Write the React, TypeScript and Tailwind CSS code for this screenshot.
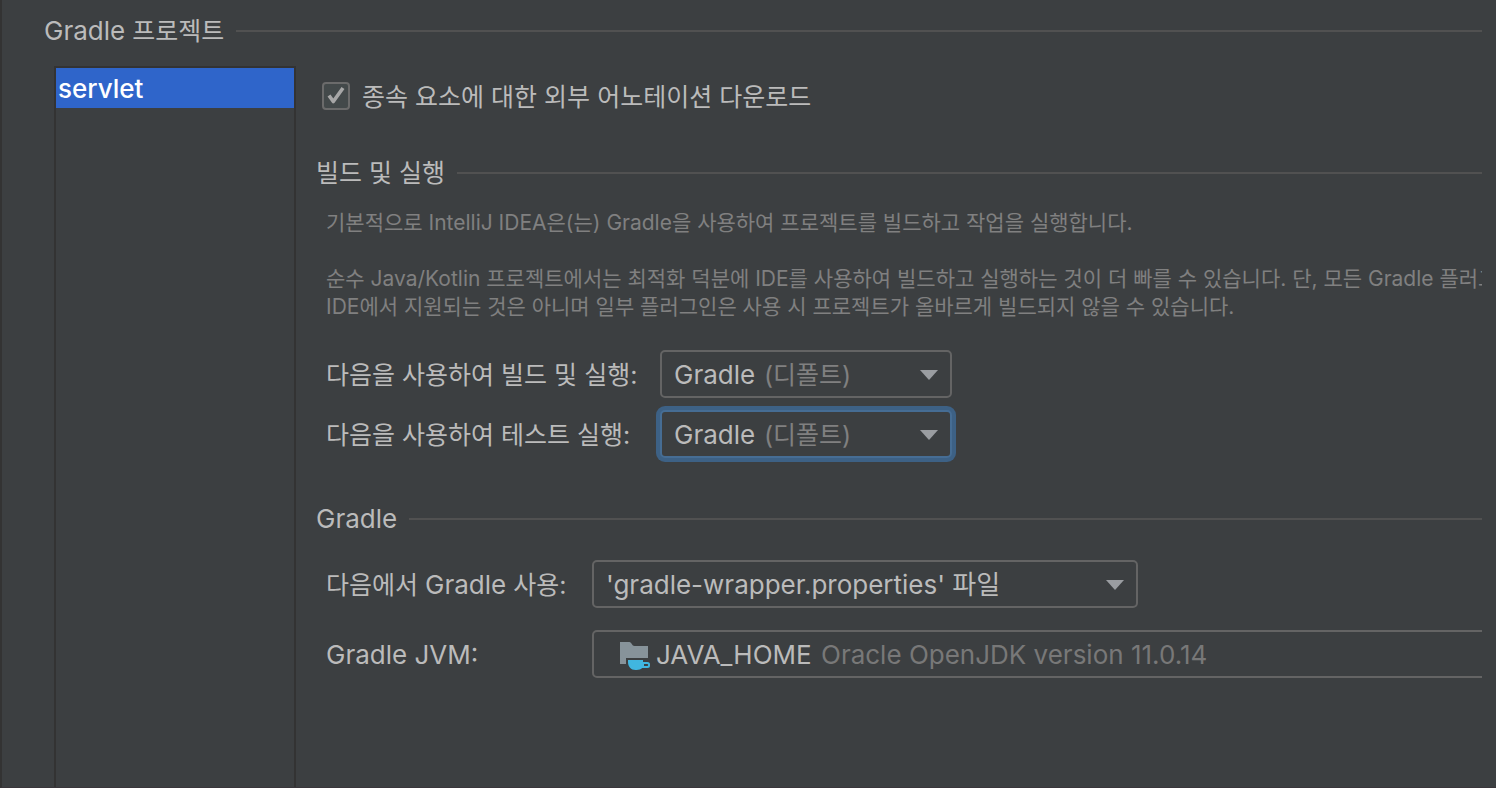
import { useId, useState } from 'react';
import type { ReactNode } from 'react';
import { clsx } from 'clsx';

function SectionTitle({ children }: { children: ReactNode }) {
  return (
    <div className="flex h-10 items-center gap-3">
      <h2 className="shrink-0 text-[25px] leading-10 font-normal">{children}</h2>
      <div className="h-[2px] flex-1 bg-[#515151]" />
    </div>
  );
}

function FieldLabel({ htmlFor, children }: { htmlFor: string; children: ReactNode }) {
  return (
    <label htmlFor={htmlFor} className="pt-px leading-8 whitespace-nowrap">
      {children}
    </label>
  );
}

function DownArrow() {
  return (
    <svg
      viewBox="0 0 18 10"
      className="pointer-events-none col-start-1 row-start-1 mt-[2px] mr-[14px] h-[10px] w-[18px] justify-self-end fill-[#9a9da1]"
      aria-hidden="true"
    >
      <path d="M0 0h18L9 10z" />
    </svg>
  );
}

function JdkFolderIcon() {
  return (
    <svg
      viewBox="0 0 30 28"
      className="pointer-events-none col-start-1 row-start-1 mt-1 ml-[28px] h-7 w-[30px]"
      aria-hidden="true"
    >
      <path fill="#87939a" d="M0 0h9.500c2 0 2.500 4 5 4H28v12H6v6H0z" />
      <path
        fill="#40b6e0"
        fillRule="evenodd"
        d="M8 18h15v2h4.500a2.500 2.500 0 0 1 2.500 2.500v1a2.500 2.500 0 0 1-2.500 2.500h-5.200C21 27.200 19 28 16.500 28h-1C11 28 8 24.500 8 20zM24 22v2h3.200a1 1 0 0 0 0-2z"
      />
    </svg>
  );
}

type PickerProps = {
  id: string;
  options: string[];
  hint?: string;
  hintClass?: string;
  className?: string;
  indentClass?: string;
  focused?: boolean;
  icon?: ReactNode;
};

function Picker({ id, options, hint, hintClass, className, indentClass = 'pl-3', focused, icon }: PickerProps) {
  return (
    <div className={clsx('grid h-12 items-center', className)}>
      <select
        id={id}
        className={clsx(
          'col-start-1 row-start-1 h-12 w-full appearance-none rounded-[5px] border-2 bg-[#3c3f41] pr-10 text-[26px] text-[#bbbbbb] outline-none',
          indentClass,
          focused ? 'border-[#466d94] ring-4 ring-[#3d6185]' : 'border-[#646464]',
        )}
      >
        {options.map((option) => (
          <option key={option}>{option}</option>
        ))}
      </select>
      {icon}
      {hint && (
        <span className={clsx('pointer-events-none col-start-1 row-start-1 whitespace-nowrap', hintClass)}>{hint}</span>
      )}
      <DownArrow />
    </div>
  );
}

export default function App() {
  const id = useId();
  const [download, setDownload] = useState(true);

  return (
    <div className="flex min-h-screen flex-col overflow-hidden border-b border-l-2 border-b-[#3a363b] border-l-[#333333] bg-[#3c3f41] pt-[11px] pr-[14px] font-['Inter','Noto_Sans_CJK_KR',sans-serif] text-[25px] text-[#bbbbbb]">
      <div className="pl-[42px]">
        <SectionTitle>
          <span className="text-[26px]">Gradle</span> 프로젝트
        </SectionTitle>
      </div>

      <div className="mt-[15px] flex flex-1 pl-[52px]">
        <ul className="w-[242px] shrink-0 border-2 border-b-0 border-[#333333]">
          <li>
            <button
              type="button"
              className="flex h-10 w-full items-center bg-[#2f65ca] pt-px pl-[2px] text-left text-[26px] font-medium text-white"
            >
              servlet
            </button>
          </li>
        </ul>

        <main className="min-w-0 flex-1 overflow-hidden pt-[14px] pl-5">
          <div className="flex h-8 items-center gap-3 pl-[6px]">
            <div className="grid size-7">
              <input
                id={`${id}-download`}
                type="checkbox"
                checked={download}
                onChange={(event) => setDownload(event.target.checked)}
                className="col-start-1 row-start-1 size-7 appearance-none rounded-[4px] border-2 border-[#6b6b6b] bg-[#43494a]"
              />
              {download && (
                <svg
                  viewBox="0 0 28 28"
                  className="pointer-events-none col-start-1 row-start-1 size-7"
                  fill="none"
                  stroke="#a7a7a7"
                  strokeWidth="3.600"
                  aria-hidden="true"
                >
                  <path d="M7 13.500l4.300 6L21 6" strokeLinecap="butt" strokeLinejoin="round" />
                </svg>
              )}
            </div>
            <FieldLabel htmlFor={`${id}-download`}>종속 요소에 대한 외부 어노테이션 다운로드</FieldLabel>
          </div>

          <section className="mt-[41px]">
            <SectionTitle>빌드 및 실행</SectionTitle>
            <div className="mt-4 flex flex-col gap-7 pl-[10px] text-[21px] leading-7 whitespace-nowrap text-[#808080]">
              <p>기본적으로 IntelliJ IDEA은(는) Gradle을 사용하여 프로젝트를 빌드하고 작업을 실행합니다.</p>
              <p>
                순수 Java/Kotlin 프로젝트에서는 최적화 덕분에 IDE를 사용하여 빌드하고 실행하는 것이 더 빠를 수 있습니다. 단,
                모든 Gradle 플러그인이
                <br />
                IDE에서 지원되는 것은 아니며 일부 플러그인은 사용 시 프로젝트가 올바르게 빌드되지 않을 수 있습니다.
              </p>
            </div>
            <div className="mt-[29px] grid grid-cols-[334px_292px] items-center gap-y-3 pl-[10px]">
              <FieldLabel htmlFor={`${id}-build`}>다음을 사용하여 빌드 및 실행:</FieldLabel>
              <Picker
                id={`${id}-build`}
                options={['Gradle', 'IntelliJ IDEA']}
                hint="(디폴트)"
                hintClass="pt-[3px] pl-[104px] text-[#808080]"
              />
              <FieldLabel htmlFor={`${id}-test`}>다음을 사용하여 테스트 실행:</FieldLabel>
              <Picker
                id={`${id}-test`}
                options={['Gradle', 'IntelliJ IDEA']}
                hint="(디폴트)"
                hintClass="pt-[3px] pl-[104px] text-[#808080]"
                focused
              />
            </div>
          </section>

          <section className="mt-[41px]">
            <SectionTitle>
              <span className="text-[26px]">Gradle</span>
            </SectionTitle>
            <div className="mt-[21px] grid grid-cols-[266px_1fr] items-center gap-y-[22px] pl-[10px]">
              <FieldLabel htmlFor={`${id}-source`}>
                다음에서 <span className="text-[26px]">Gradle</span> 사용:
              </FieldLabel>
              <Picker
                id={`${id}-source`}
                options={["'gradle-wrapper.properties' 파일"]}
                className="w-[546px]"
              />
              <FieldLabel htmlFor={`${id}-jvm`}>
                <span className="text-[26px]">Gradle JVM:</span>
              </FieldLabel>
              <Picker
                id={`${id}-jvm`}
                options={['JAVA_HOME']}
                hint="Oracle OpenJDK version 11.0.14"
                hintClass="pl-[229px] text-[26px] text-[#787878]"
                className="-mr-10"
                indentClass="pl-[62px]"
                icon={<JdkFolderIcon />}
              />
            </div>
          </section>
        </main>
      </div>
    </div>
  );
}
